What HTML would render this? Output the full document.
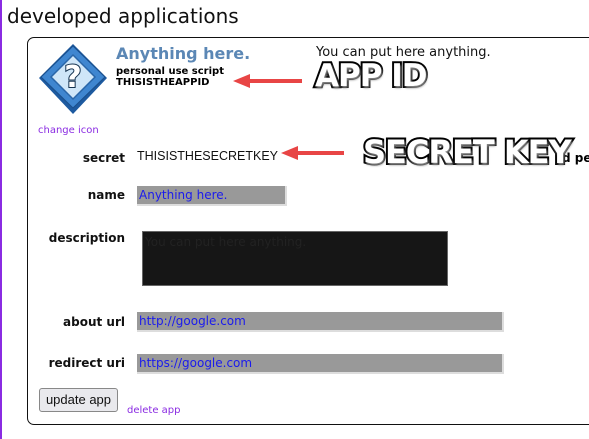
<!DOCTYPE html>
<html><head><meta charset="utf-8"><style>
body{margin:0;width:589px;height:439px;background:#fff;position:relative;overflow:hidden;font-family:"DejaVu Sans","Liberation Sans",sans-serif;}
.a{position:absolute;white-space:nowrap;}
.lbl{position:absolute;right:464px;font-weight:bold;font-size:12px;color:#111;}
.inp{position:absolute;background:#999;border-bottom:2px solid #ddd;border-right:2px solid #ddd;color:#1a1aee;font-size:12px;line-height:18px;padding-left:2px;box-sizing:border-box;height:20px;}
.big{position:absolute;font-family:"DejaVu Sans","Liberation Sans",sans-serif;font-weight:900;color:#fff;-webkit-text-stroke:4px #000;paint-order:stroke fill;letter-spacing:-1px;text-shadow:1px 2px 2px #888;}
</style></head><body>
<div class="a" style="left:0;top:0;width:2px;height:439px;background:#8a2be2"></div>
<div class="a" style="left:7px;top:4px;font-size:20px;color:#111">developed applications</div>
<div class="a" style="left:27px;top:37px;width:600px;height:386px;border:1px solid #111;border-radius:7px"></div>
<svg class="a" style="left:37px;top:42px" width="72" height="76" viewBox="0 0 72 76">
<polygon points="36,2 70,36 36,72 2,36" fill="#1d5aa0"/>
<polygon points="36,4 68,35 36,66 4,35" fill="#3f86d0" stroke="#1a4f8c" stroke-width="1"/>
<polygon points="36,13 58,35 36,57 14,35" fill="#cfe6f8" stroke="#2a66a8" stroke-width="1.5"/>
<text x="36" y="45" text-anchor="middle" font-size="30" font-weight="bold" fill="#fff" stroke="#14324f" stroke-width="2" paint-order="stroke" font-family="DejaVu Sans">?</text>
</svg>
<div class="a" style="left:116px;top:44px;font-size:16px;font-weight:bold;color:#5b87b5">Anything here.</div>
<div class="a" style="left:116px;top:66px;font-size:10px;font-weight:bold;color:#000">personal use script</div>
<div class="a" style="left:116px;top:77px;font-size:10px;font-weight:bold;color:#000">THISISTHEAPPID</div>
<div class="a" style="left:316px;top:45px;font-size:13px;color:#111">You can put here anything.</div>
<svg class="a" style="left:230px;top:72px" width="75" height="18"><line x1="14" y1="9" x2="72" y2="9" stroke="#e84545" stroke-width="4"/><polygon points="3,9 20,2 20,16" fill="#e84545"/></svg>
<div class="a" style="left:562px;top:151px;font-size:12px;font-weight:bold">d per</div>
<div class="big" style="left:315px;top:58px;font-size:31px">APP ID</div>
<div class="a" style="left:38px;top:125px;font-size:10px;color:#8a2be2">change icon</div>
<div class="lbl" style="top:151px">secret</div>
<div class="a" style="left:137px;top:149px;font-family:'Liberation Sans',sans-serif;font-size:12.5px;color:#111">THISISTHESECRETKEY</div>
<svg class="a" style="left:278px;top:144px" width="70" height="18"><line x1="14" y1="9" x2="66" y2="9" stroke="#e84545" stroke-width="4"/><polygon points="3,9 20,2 20,16" fill="#e84545"/></svg>
<div class="big" style="left:363px;top:133px;font-size:32px">SECRET KEY</div>
<div class="lbl" style="top:188px">name</div>
<div class="inp" style="left:137px;top:186px;width:150px">Anything here.</div>
<div class="lbl" style="top:231px">description</div>
<div class="a" style="left:142px;top:231px;width:306px;height:55px;background:#161616;border:1px solid #666;box-sizing:border-box;color:#222;font-size:12px;padding:3px 2px">You can put here anything.</div>
<div class="lbl" style="top:315px">about url</div>
<div class="inp" style="left:137px;top:312px;width:367px">http://google.com</div>
<div class="lbl" style="top:356px">redirect uri</div>
<div class="inp" style="left:137px;top:354px;width:367px">https://google.com</div>
<div class="a" style="left:39px;top:388px;width:79px;height:24px;box-sizing:border-box;border:1px solid #888;border-radius:3px;background:#e9e9ed;font-family:'Liberation Sans',sans-serif;font-size:13px;text-align:center;line-height:22px;color:#111">update app</div>
<div class="a" style="left:127px;top:405px;font-size:10px;color:#8a2be2">delete app</div>
</body></html>
